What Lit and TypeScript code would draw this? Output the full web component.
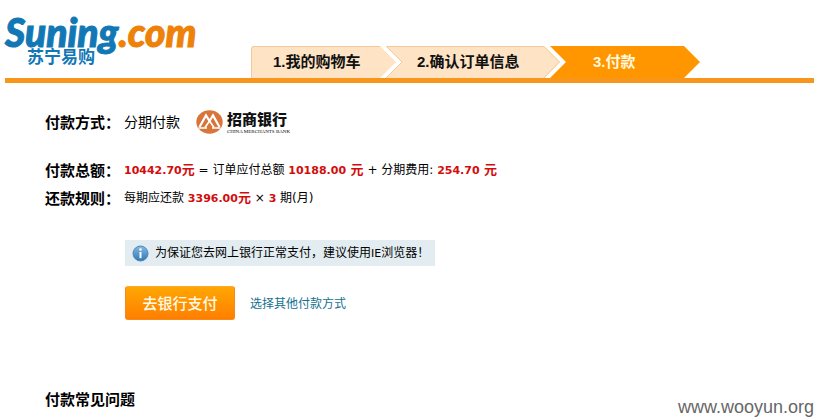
import { LitElement, html, css, svg } from "lit";
import { customElement } from "lit/decorators.js";

@customElement("suning-logo")
class SuningLogo extends LitElement {
  static styles = css`
    :host { display: block; }
    a { display: block; text-decoration: none; color: #1277b5; }
    .word { display: block; font: italic 900 39px/40px Lato, sans-serif; -webkit-text-stroke: 1px currentColor; white-space: nowrap; }
    .dot { color: #ee8208; }
    .cn { display: block; margin: -6px 0 0 22px; font: 700 17px/20px "Noto Sans CJK SC", sans-serif; }
  `;
  render() {
    return html`<a href="#"><span class="word">Suning<span class="dot">.com</span></span><span class="cn">苏宁易购</span></a>`;
  }
}

@customElement("step-bar")
class StepBar extends LitElement {
  static styles = css`
    :host { display: block; }
    ol { display: flex; margin: 0; padding: 0; list-style: none; }
    li { position: relative; height: 32px; flex: none; }
    li + li { margin-left: -10px; }
    svg { display: block; }
    .label { position: absolute; top: 0; left: 0; padding-left: 22px; font: 700 15px/32px "Liberation Sans", "Noto Sans CJK SC", sans-serif; color: #111; white-space: nowrap; }
    .mid .label { padding-left: 31px; }
    .now .label { padding-left: 43px; color: #fff8dc; }
    .soft { fill: #fee3c4; }
    .line { fill: none; stroke: #f3c999; }
    .full { fill: #ff9600; }
  `;
  render() {
    return html`
      <ol>
        <li>
          <svg width="145" height="32">${svg`<path class="soft" d="M0 32V3Q0 0 3 0H129L145 16L129 32Z"/><path class="line" d="M.5 32V3Q.5 .5 3 .5H129"/>`}</svg>
          <span class="label">1.我的购物车</span>
        </li>
        <li class="mid">
          <svg width="174" height="32">${svg`<path class="soft" d="M0 0H158L174 16L158 32H0L16 16Z"/><path class="line" d="M0 32L16 16L.5 .5H158L173.500 16L158 32"/>`}</svg>
          <span class="label">2.确认订单信息</span>
        </li>
        <li class="now" aria-current="step">
          <svg width="150" height="32">${svg`<path class="full" d="M0 0H134L150 16L134 32H0L16 16Z"/>`}</svg>
          <span class="label">3.付款</span>
        </li>
      </ol>`;
  }
}

@customElement("cmb-logo")
class CmbLogo extends LitElement {
  static styles = css`
    :host { display: flex; align-items: center; gap: 4px; }
    svg { display: block; flex: none; }
    .cn { display: block; font: 900 15px/20px "Noto Sans CJK SC", sans-serif; color: #111; }
    .en { display: block; font: 400 5px/6px "Liberation Serif", serif; color: #000; white-space: nowrap; }
  `;
  render() {
    return html`
      <svg width="27" height="24" viewBox="0 0 27 24">
        <ellipse cx="13.500" cy="12" rx="13.200" ry="11.800" fill="#d7753a" />
        <path d="M3.500 17L10 5.500L13.500 11L17 5.500L23.500 17" fill="none" stroke="#fff" stroke-width="2.200" />
        <path d="M9 17.500L13.500 11L18 17.500" fill="none" stroke="#fff" stroke-width="1.600" />
        <path d="M2.500 18H11M16 18H24.500" stroke="#fff" stroke-width="1.600" />
      </svg>
      <span><span class="cn">招商银行</span><span class="en">CHINA MERCHANTS BANK</span></span>`;
  }
}

@customElement("app-root")
class AppRoot extends LitElement {
  static styles = css`
    :host { display: block; background: #fff; color: #000; font: 12px/20px "Noto Sans CJK SC", sans-serif; }
    header { display: flex; align-items: flex-end; margin-left: 5px; border-bottom: 5px solid #f8951b; height: 78px; }
    suning-logo { width: 246px; height: 66px; flex: none; }
    main { padding: 25px 0 0 45px; }
    dl { display: grid; grid-template-columns: 79px 1fr; margin: 0; align-items: center; }
    dt { font-size: 15px; font-weight: 700; line-height: 28px; white-space: nowrap; }
    dd { margin: 0; font-family: "DejaVu Sans", "Noto Sans CJK SC", sans-serif; line-height: 28px; white-space: nowrap; }
    .method { display: flex; align-items: center; gap: 16px; font-size: 14px; }
    dl.kind { margin-bottom: 20px; grid-template-rows: 28px; }
    dl.sums { grid-template-rows: 28px 28px; }
    b { color: #d30c0c; font-size: 13px; }
    .num { font-family: "DejaVu Sans", sans-serif; font-size: 11px; }
    .pay { margin-left: 80px; }
    .tip { display: flex; align-items: center; gap: 6px; box-sizing: border-box; width: 310px; height: 26px; margin: 28px 0 20px; padding: 0 7px; background: #e3edf1; white-space: nowrap; }
    .tip svg { flex: none; }
    .tip p { margin: 0; }
    .go { display: flex; align-items: center; gap: 15px; }
    button { box-sizing: border-box; width: 110px; height: 34px; padding: 0; border: 1px solid #f58a14; border-top-color: #ffa826; border-radius: 3px; background: linear-gradient(#ffa702, #ff7e00); color: #fffbe8; font: 500 15px/30px "Noto Sans CJK SC", sans-serif; }
    .other { color: #14708f; text-decoration: none; }
    footer { display: flex; justify-content: space-between; align-items: flex-start; margin: 65px 0 0 45px; }
    h2 { margin: 0; font-size: 15px; line-height: 28px; }
    .site { margin-top: 12px; color: #666; font: 18px/20px "Liberation Sans", sans-serif; }
  `;
  render() {
    return html`
      <header>
        <suning-logo></suning-logo>
        <step-bar></step-bar>
      </header>
      <main>
        <dl class="kind">
          <dt>付款方式：</dt>
          <dd class="method">分期付款 <cmb-logo role="img" aria-label="招商银行"></cmb-logo></dd>
        </dl>
        <dl class="sums">
          <dt>付款总额：</dt>
          <dd><b><span class="num">10442.70</span>元</b> = 订单应付总额 <b><span class="num">10188.00</span> 元</b> + 分期费用: <b><span class="num">254.70</span> 元</b></dd>
          <dt>还款规则：</dt>
          <dd>每期应还款 <b><span class="num">3396.00</span>元</b> × <b class="num">3</b> 期(月)</dd>
        </dl>
        <div class="pay">
          <div class="tip">
            <svg width="17" height="17" viewBox="0 0 17 17">
              <defs><linearGradient id="g" x2="0" y2="1"><stop stop-color="#86b9e0" /><stop offset="1" stop-color="#2f78b8" /></linearGradient></defs>
              <circle cx="8.500" cy="8.500" r="7.500" fill="url(#g)" stroke="#4b88bb" />
              <circle cx="8.500" cy="4.500" r="1.300" fill="#fff" />
              <path d="M8.500 7V13.200" fill="none" stroke="#fff" stroke-width="2" />
            </svg>
            <p>为保证您去网上银行正常支付，建议使用<span class="num">IE</span>浏览器！</p>
          </div>
          <div class="go">
            <button type="button">去银行支付</button>
            <a class="other" href="#">选择其他付款方式</a>
          </div>
        </div>
      </main>
      <footer>
        <h2>付款常见问题</h2>
        <span class="site">www.wooyun.org</span>
      </footer>`;
  }
}
